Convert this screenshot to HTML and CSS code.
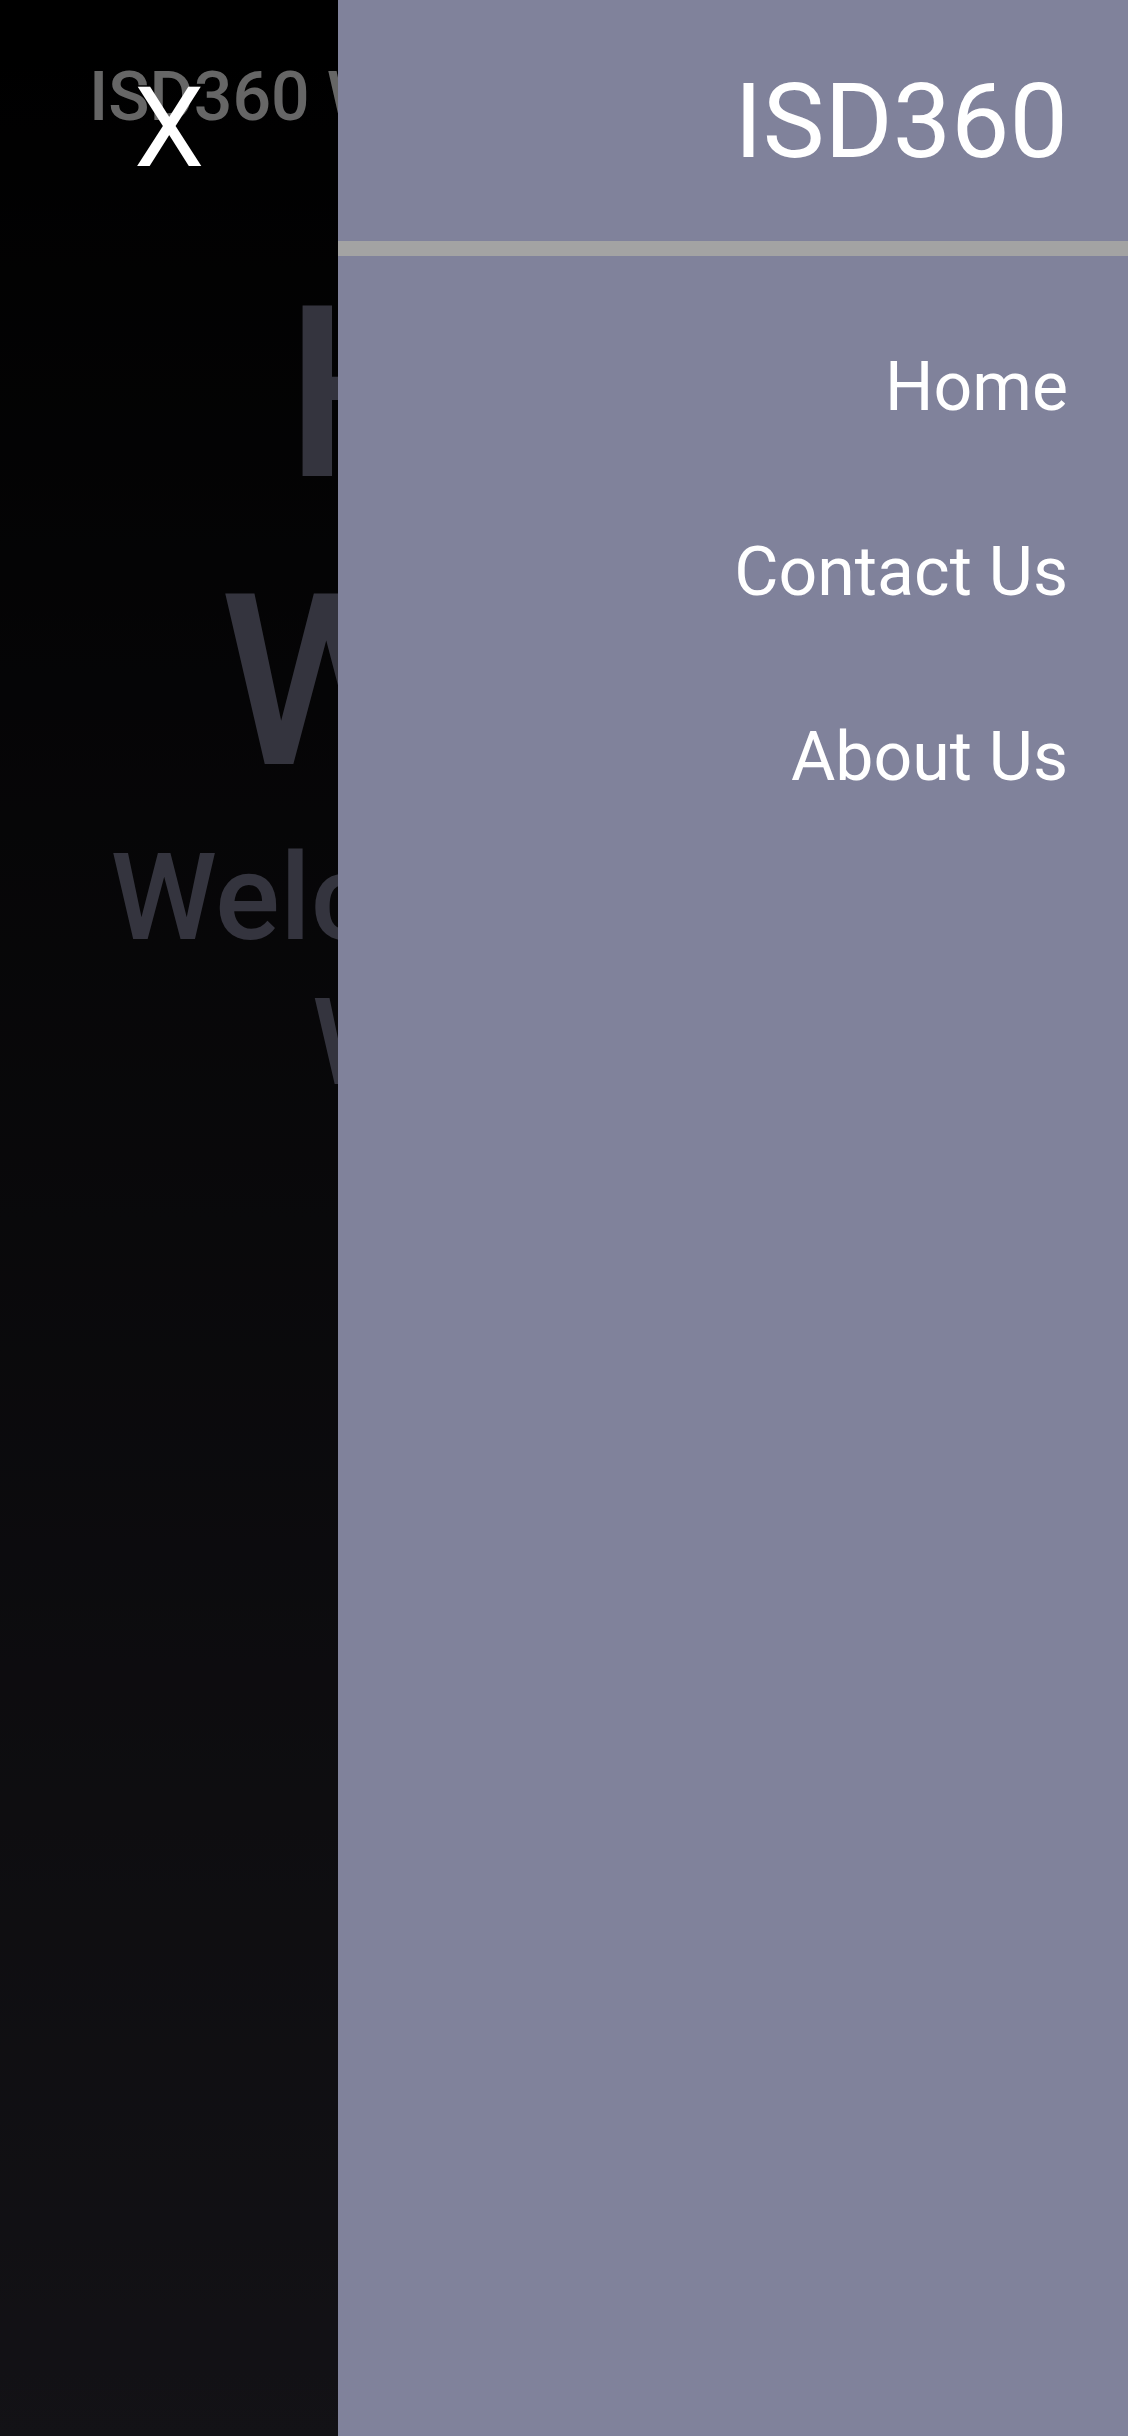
FILE: index.html
```html
<!DOCTYPE html>
<html lang="en">
<head>
<meta charset="utf-8">
<title>ISD360</title>
<link rel="stylesheet" href="styles.css">
</head>
<body>
<div class="page">
  <header class="site-header">
    <div class="site-title">ISD360 Website</div>
  </header>
  <main class="hero">
    <h1 class="hero-title">Hello<br>World!</h1>
    <h2 class="hero-sub">Welcome to your<br>Webpage</h2>
  </main>
</div>

<div class="scrim">
  <button class="close-btn" type="button">X</button>
</div>

<aside class="drawer">
  <div class="drawer-header">ISD360</div>
  <nav class="drawer-nav">
    <a class="drawer-link" href="#">Home</a>
    <a class="drawer-link" href="#">Contact Us</a>
    <a class="drawer-link" href="#">About Us</a>
  </nav>
</aside>
</body>
</html>
```

FILE: styles.css
```css
* {
  box-sizing: border-box;
}

html, body {
  margin: 0;
  padding: 0;
}

body {
  width: 1128px;
  height: 2436px;
  overflow: hidden;
  font-family: Roboto, "Noto Sans", "Liberation Sans", sans-serif;
  background: linear-gradient(to bottom, #000000 0%, #26242c 100%);
  position: relative;
}

.page {
  height: 100%;
}

.site-header {
  padding: 57px 0 0 89px;
}

.site-title {
  font-size: 68px;
  font-weight: 500;
  color: #cccccc;
  line-height: normal;
}

.hero {
  padding-top: 113px;
  text-align: center;
}

.hero-title {
  margin: 0;
  font-size: 240px;
  font-weight: 500;
  line-height: 1.2;
  color: #68687c;
}

.hero-sub {
  margin: 0;
  font-size: 121px;
  font-weight: 500;
  line-height: 1.2;
  color: #68687c;
}

.scrim {
  position: absolute;
  inset: 0;
  background: rgba(0, 0, 0, 0.5);
  display: flex;
  flex-direction: column;
  align-items: flex-start;
}

.close-btn {
  width: 338px;
  margin: 0;
  padding: 62px 0 0 0;
  border: 0;
  background: none;
  color: #ffffff;
  font-family: Roboto, "Noto Sans", "Liberation Sans", sans-serif;
  font-size: 112px;
  font-weight: 400;
  line-height: normal;
  text-align: center;
  cursor: pointer;
}

.drawer {
  position: absolute;
  top: 0;
  right: 0;
  width: 790px;
  height: 100%;
  background: #80829b;
  color: #ffffff;
  text-align: right;
}

.drawer-header {
  padding: 61px 60px 59px 0;
  font-size: 104px;
  font-weight: 400;
  line-height: normal;
  border-bottom: 15px solid #a3a3a3;
}

.drawer-nav {
  display: flex;
  flex-direction: column;
  padding: 39px 60px 0 0;
}

.drawer-link {
  display: block;
  padding: 52px 0 53px;
  font-size: 68px;
  font-weight: 400;
  line-height: 80px;
  color: #ffffff;
  text-decoration: none;
}
```
